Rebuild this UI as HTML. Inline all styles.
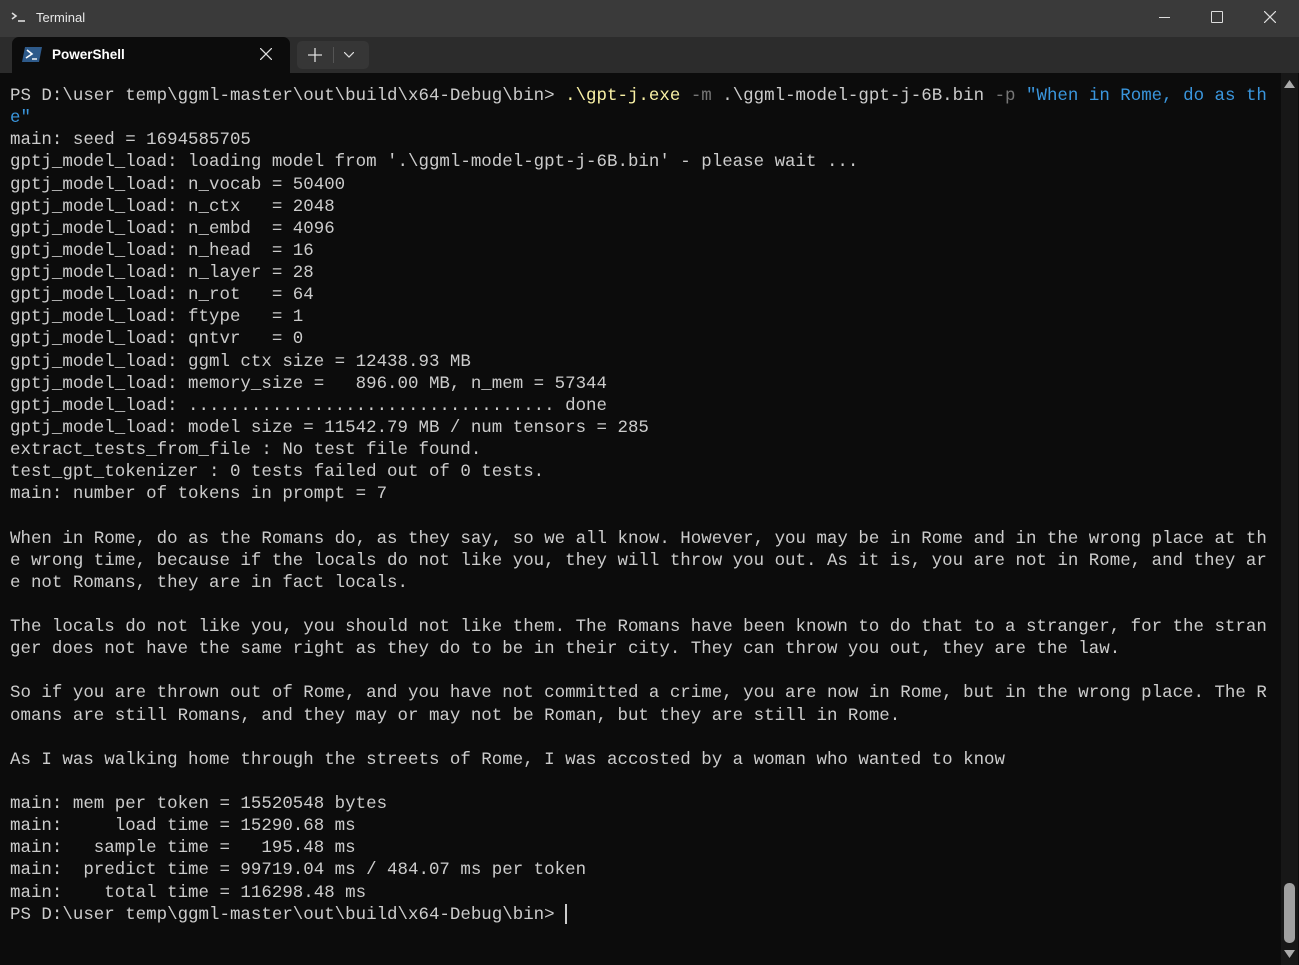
<!DOCTYPE html>
<html><head><meta charset="utf-8"><style>
html,body{margin:0;padding:0;}
body{width:1299px;height:965px;background:#0c0c0c;position:relative;overflow:hidden;font-family:"Liberation Sans",sans-serif;}
#title{position:absolute;left:0;top:0;width:1299px;height:37px;background:#3a3a3a;}
#tabs{position:absolute;left:0;top:37px;width:1299px;height:36px;background:#2c2c2c;}
#tab{position:absolute;left:12px;top:0;width:278px;height:36px;background:#0c0c0c;border-radius:7px 7px 0 0;}
#newbtn{position:absolute;left:297px;top:41px;width:72px;height:28px;background:#363636;border-radius:5px;}
#term{position:absolute;left:10px;top:85px;margin:0;font-family:"Liberation Mono",monospace;font-size:17.47px;line-height:22.13px;color:#cccccc;white-space:pre;}
.y{color:#f9f1a5}.g{color:#767676}.b{color:#3a96dd}
#track{position:absolute;left:1281px;top:73px;width:17px;height:892px;background:#171717;}
#thumb{position:absolute;left:1284px;top:883px;width:11px;height:60px;background:#a0a0a0;border-radius:5px;}
</style></head><body>
<div id="title">
<svg style="position:absolute;left:10px;top:10px" width="18" height="14" viewBox="0 0 18 14"><path d="M2 3 L6 6 L2 9" stroke="#ddd" stroke-width="1.6" fill="none"/><path d="M8 11 H15" stroke="#ddd" stroke-width="1.6"/></svg>
<div style="position:absolute;left:36px;top:10px;color:#e8e8e8;font-size:13px;">Terminal</div>
<div style="position:absolute;left:1159px;top:17px;width:11px;height:1px;background:#ddd"></div>
<div style="position:absolute;left:1211px;top:11px;width:10px;height:10px;border:1px solid #ddd;border-radius:1px"></div>
<svg style="position:absolute;left:1264px;top:11px" width="12" height="12"><path d="M0 0L12 12M12 0L0 12" stroke="#ddd" stroke-width="1.2"/></svg>
</div>
<div id="tabs"><div id="tab">
<svg style="position:absolute;left:10px;top:10px" width="20" height="15" viewBox="0 0 20 15"><path d="M3 0H20L17 15H0Z" fill="#2e5a8a"/><path d="M5 3L10 7L4 11" stroke="#fff" stroke-width="1.6" fill="none"/><path d="M10 12H15" stroke="#fff" stroke-width="1.4"/></svg>
<div style="position:absolute;left:40px;top:10px;color:#fff;font-size:13.5px;font-weight:bold;">PowerShell</div>
<svg style="position:absolute;left:248px;top:11px" width="12" height="12"><path d="M0 0L12 12M12 0L0 12" stroke="#ddd" stroke-width="1.3"/></svg>
</div></div>
<div id="newbtn">
<svg style="position:absolute;left:11px;top:7px" width="14" height="14"><path d="M7 0V14M0 7H14" stroke="#ddd" stroke-width="1.3"/></svg>
<div style="position:absolute;left:36px;top:6px;width:1px;height:16px;background:#555"></div>
<svg style="position:absolute;left:47px;top:11px" width="10" height="6"><path d="M0 0L5 5L10 0" stroke="#ddd" stroke-width="1.2" fill="none"/></svg>
</div>
<pre id="term">PS D:\user temp\ggml-master\out\build\x64-Debug\bin&gt; <span class="y">.\gpt-j.exe</span> <span class="g">-m</span> .\ggml-model-gpt-j-6B.bin <span class="g">-p</span> <span class="b">"When in Rome, do as th
e"</span>
main: seed = 1694585705
gptj_model_load: loading model from '.\ggml-model-gpt-j-6B.bin' - please wait ...
gptj_model_load: n_vocab = 50400
gptj_model_load: n_ctx   = 2048
gptj_model_load: n_embd  = 4096
gptj_model_load: n_head  = 16
gptj_model_load: n_layer = 28
gptj_model_load: n_rot   = 64
gptj_model_load: ftype   = 1
gptj_model_load: qntvr   = 0
gptj_model_load: ggml ctx size = 12438.93 MB
gptj_model_load: memory_size =   896.00 MB, n_mem = 57344
gptj_model_load: ................................... done
gptj_model_load: model size = 11542.79 MB / num tensors = 285
extract_tests_from_file : No test file found.
test_gpt_tokenizer : 0 tests failed out of 0 tests.
main: number of tokens in prompt = 7

When in Rome, do as the Romans do, as they say, so we all know. However, you may be in Rome and in the wrong place at th
e wrong time, because if the locals do not like you, they will throw you out. As it is, you are not in Rome, and they ar
e not Romans, they are in fact locals.

The locals do not like you, you should not like them. The Romans have been known to do that to a stranger, for the stran
ger does not have the same right as they do to be in their city. They can throw you out, they are the law.

So if you are thrown out of Rome, and you have not committed a crime, you are now in Rome, but in the wrong place. The R
omans are still Romans, and they may or may not be Roman, but they are still in Rome.

As I was walking home through the streets of Rome, I was accosted by a woman who wanted to know

main: mem per token = 15520548 bytes
main:     load time = 15290.68 ms
main:   sample time =   195.48 ms
main:  predict time = 99719.04 ms / 484.07 ms per token
main:    total time = 116298.48 ms
PS D:\user temp\ggml-master\out\build\x64-Debug\bin&gt; <span style="display:inline-block;width:2px;height:20px;background:#ccc;vertical-align:middle"></span></pre>
<div id="track"></div>
<svg style="position:absolute;left:1284px;top:80px" width="11" height="8"><path d="M0 8L5.5 0L11 8Z" fill="#aaa"/></svg>
<div id="thumb"></div>
<svg style="position:absolute;left:1284px;top:950px" width="11" height="8"><path d="M0 0L5.5 8L11 0Z" fill="#aaa"/></svg>
</body></html>
